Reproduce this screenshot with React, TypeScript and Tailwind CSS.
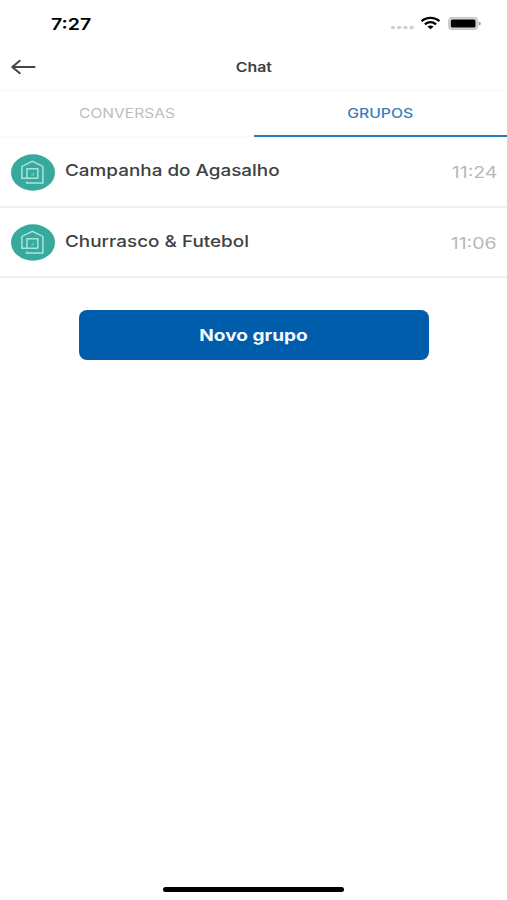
import React from 'react';

interface Group {
  name: string;
  time: string;
}

const groups: Group[] = [
  { name: 'Campanha do Agasalho', time: '11:24' },
  { name: 'Churrasco & Futebol', time: '11:06' },
];

function StatusBar() {
  return (
    <div className="flex h-[46px] items-start justify-between pl-[51px] pr-[25px] pt-[13px]">
      <span className="mt-px origin-left scale-x-[1.22] text-[16px] font-semibold leading-[21px] text-black">7:27</span>
      <svg className="h-[20px] w-[92px]" viewBox="0 0 92 20">
        {[3, 9.2, 15.4, 21.6].map((x) => (
          <ellipse key={x} cx={x} cy="14.5" rx="2.2" ry="1.8" fill="#cfcfcf" />
        ))}
        <g fill="none" stroke="#000" strokeWidth="2.3">
          <path d="M31.6 8.2 C36.4 3.8 44.6 3.8 49.4 8.2" />
          <path d="M34.9 11.4 C38.2 8.5 42.8 8.5 46.1 11.4" />
        </g>
        <path d="M37.4 13.6 C39 12.2 42 12.2 43.6 13.6 L40.5 16.3 Z" fill="#000" />
        <rect x="58.9" y="4.6" width="28.6" height="11.6" rx="3.2" fill="#ddd" stroke="#c4c4c4" strokeWidth="1.4" />
        <rect x="60.8" y="6.4" width="24.7" height="8.2" rx="1.6" fill="#000" />
        <path d="M88.9 8.7 C91.5 9 91.5 12 88.9 12.3 Z" fill="#999" />
      </svg>
    </div>
  );
}

function Header() {
  return (
    <header className="relative flex h-[45px] items-center justify-center border-b border-[#f8f8f8]">
      <button className="absolute left-[10px] top-[12px]" aria-label="Voltar">
        <svg className="h-[18px] w-[27px]" viewBox="0 0 27 18" fill="none" stroke="#444" strokeWidth="2" strokeLinecap="round" strokeLinejoin="round">
          <path d="M24.6 9 H2.2 M9.8 2.8 L2.2 9 L9.8 15.2" />
        </svg>
      </button>
      <h1 className="-mt-[2px] scale-x-[1.22] text-[13px] font-semibold leading-[20px] text-[#404040]">Chat</h1>
    </header>
  );
}

function Tabs() {
  return (
    <div className="flex h-[46px] text-[13px] leading-[20px]">
      <div className="flex flex-1 items-start justify-center border-b border-[#fafafa] pt-[12px] text-[#bdbdbd]">
        <span className="scale-x-[1.2]">CONVERSAS</span>
      </div>
      <div className="flex flex-1 items-start justify-center border-b-2 border-[#2f7db8] pt-[12px] font-medium text-[#3a80b8]">
        <span className="scale-x-[1.21]">GRUPOS</span>
      </div>
    </div>
  );
}

function GroupIcon() {
  return (
    <svg className="h-[37px] w-[44px] shrink-0" viewBox="0 0 44 37">
      <ellipse cx="22" cy="18.5" rx="22" ry="18.2" fill="#38a99d" />
      <g fill="none" stroke="#a5e6dd" strokeWidth="1.5">
        <path d="M26.8 24.3 H10.9 V12.4 L21.3 7.4 L31.9 12.4 V29 H15.6 V27.4" />
        <path d="M16 24.3 V14.8 H26.8 V24.3" />
        <path d="M19.8 21 H22.4 V18.8" strokeWidth="1.2" opacity="0.6" />
      </g>
    </svg>
  );
}

function GroupRow({ name, time }: Group) {
  return (
    <li className="flex h-[70.5px] items-center border-b-2 border-[#efefef] pl-[11px] pr-[10px] pt-[2px]">
      <GroupIcon />
      <span className="-mt-[4px] ml-[10px] origin-left scale-x-[1.18] whitespace-nowrap text-[16px] font-medium leading-[22px] text-[#404040]">
        {name}
      </span>
      <span className="ml-auto origin-right scale-x-[1.22] text-[16px] leading-[22px] text-[#b8b8b8]">{time}</span>
    </li>
  );
}

export default function App() {
  return (
    <div className="flex h-[900px] w-[507px] flex-col overflow-hidden bg-white font-['Inter','Liberation_Sans',sans-serif]">
      <StatusBar />
      <Header />
      <Tabs />
      <ul>
        {groups.map((group) => (
          <GroupRow key={group.name} {...group} />
        ))}
      </ul>
      <button className="mx-auto mt-[32px] flex h-[50px] w-[350px] items-center justify-center rounded-[8px] bg-[#005dab] text-[16px] font-bold text-[#f4faff]">
        <span className="scale-x-[1.19]">Novo grupo</span>
      </button>
      <div className="mx-auto mb-[8px] mt-auto h-[5px] w-[181px] rounded-full bg-black" />
    </div>
  );
}
